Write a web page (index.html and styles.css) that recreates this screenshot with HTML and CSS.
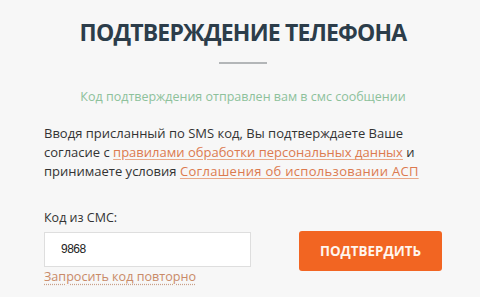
FILE: index.html
```html
<!DOCTYPE html>
<html lang="ru">
<head>
<meta charset="utf-8">
<title>Подтверждение телефона</title>
<link rel="stylesheet" href="styles.css">
</head>
<body>
<main class="card">
  <header class="head">
    <h1 class="title">ПОДТВЕРЖДЕНИЕ ТЕЛЕФОНА</h1>
    <div class="divider"></div>
    <p class="sent">Код подтверждения отправлен вам в смс сообщении</p>
  </header>
  <p class="agree">Вводя присланный по SMS код, Вы подтверждаете Ваше согласие с <a class="doc-link" href="#">правилами обработки персональных данных</a> и принимаете условия <a class="doc-link wide" href="#">Соглашения об использовании АСП</a></p>
  <form class="form">
    <label class="label" for="code">Код из СМС:</label>
    <div class="row">
      <div class="field">
        <input class="input" id="code" type="text" value="9868">
        <a class="resend" href="#">Запросить код повторно</a>
      </div>
      <button class="btn" type="button">ПОДТВЕРДИТЬ</button>
    </div>
  </form>
</main>
</body>
</html>
```
FILE: styles.css
```css
html, body {
  margin: 0;
  padding: 0;
  background: #f7f7f7;
}
body {
  font-family: "Open Sans", "Noto Sans", sans-serif;
  color: #333333;
}
.card {
  width: 398px;
  padding: 16px 0 0 44px;
}
.head {
  text-align: center;
}
.title {
  margin: 0;
  font-size: 23px;
  line-height: 32px;
  font-weight: 700;
  color: #2c3d4a;
  letter-spacing: -0.8px;
  white-space: nowrap;
}
.divider {
  width: 48px;
  height: 2px;
  margin: 14px auto 0;
  background: #b3b6b8;
}
.sent {
  margin: 24px 0 0;
  font-size: 12.5px;
  line-height: 18px;
  color: #8dc19b;
}
.agree {
  margin: 18px 0 0;
  font-size: 13px;
  line-height: 19.2px;
  color: #333333;
}
.doc-link {
  color: #dc7a4f;
  text-decoration: underline;
  text-decoration-color: #e9a888;
  text-underline-offset: 2px;
}
.wide {
  letter-spacing: 0.3px;
}
.form {
  margin: 26px 0 0;
  display: flex;
  flex-direction: column;
}
.label {
  font-size: 12.5px;
  line-height: 19.2px;
  color: #333333;
}
.row {
  display: flex;
  justify-content: space-between;
  align-items: flex-start;
  margin-top: 5px;
}
.field {
  display: flex;
  flex-direction: column;
  align-items: flex-start;
}
.input {
  box-sizing: border-box;
  width: 207px;
  height: 35px;
  margin: 0;
  padding: 0 0 0 16px;
  border: 1px solid #dedede;
  background: #ffffff;
  font-family: "Liberation Sans", Arial, sans-serif;
  font-size: 12px;
  letter-spacing: -0.5px;
  color: #222222;
  outline: none;
}
.resend {
  font-size: 12.6px;
  line-height: 19px;
  color: #c98a68;
  text-decoration: underline dotted;
  text-decoration-color: #c9a08a;
  text-underline-offset: 3px;
}
.btn {
  box-sizing: border-box;
  width: 143px;
  height: 40px;
  margin-top: -1px;
  border: none;
  border-radius: 3px;
  background: #f26522;
  color: #fff6ee;
  font-family: "Open Sans", sans-serif;
  font-weight: 700;
  font-size: 13.4px;
  padding: 0;
  cursor: pointer;
}
```
